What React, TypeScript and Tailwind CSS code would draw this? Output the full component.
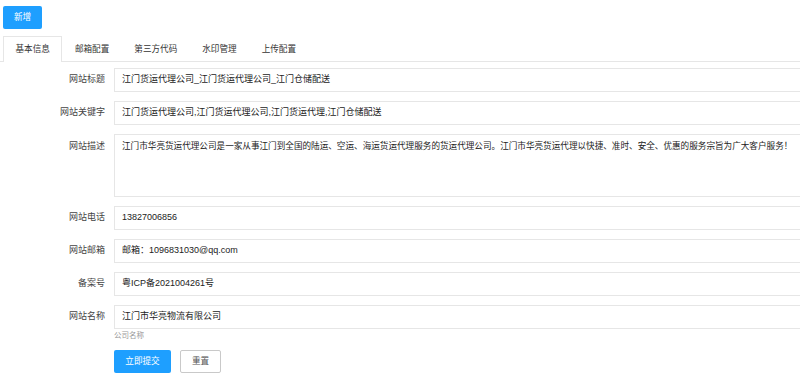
const FIELDS = [
  { label: '网站标题', value: '江门货运代理公司_江门货运代理公司_江门仓储配送' },
  { label: '网站关键字', value: '江门货运代理公司,江门货运代理公司,江门货运代理,江门仓储配送' },
];

const FIELDS2 = [
  { label: '网站电话', value: '13827006856' },
  { label: '网站邮箱', value: '邮箱：1096831030@qq.com' },
  { label: '备案号', value: '粤ICP备2021004261号' },
];

const TABS = ['基本信息', '邮箱配置', '第三方代码', '水印管理', '上传配置'];

const DESC =
  '江门市华亮货运代理公司是一家从事江门到全国的陆运、空运、海运货运代理服务的货运代理公司。江门市华亮货运代理以快捷、准时、安全、优惠的服务宗旨为广大客户服务！';

function Row({ label, value }: { label: string; value: string }) {
  return (
    <div className="flex items-center mb-[9px]">
      <div className="w-[111px] shrink-0 pr-[9px] text-right text-[9px] text-[#444]">{label}</div>
      <div className="flex-1 -mr-[20px] h-[24px] border border-[#e6e6e6] bg-white flex items-center pl-[7px] text-[9px] text-[#222] whitespace-nowrap">
        {value}
      </div>
    </div>
  );
}

export default function App() {
  return (
    <div
      className="w-[800px] h-[381px] overflow-hidden bg-white pt-[6px]"
      style={{ fontFamily: '"Liberation Sans", "Noto Sans CJK SC", sans-serif' }}
    >
      {/* Toolbar */}
      <div className="pl-[3px]">
        <button className="w-[39px] h-[23px] bg-[#1E9FFF] text-white text-[8.6px] rounded-[2px] flex items-center justify-center">
          新增
        </button>
      </div>

      {/* Tabs */}
      <div className="mt-[7px] pl-[3px] flex border-b border-[#e6e6e6]">
        {TABS.map((t, idx) => (
          <div
            key={t}
            className={`h-[26px] -mb-px px-[11.5px] flex items-center text-[8.6px] text-[#333] ${
              idx === 0 ? 'bg-white border-t border-l border-r border-[#e6e6e6]' : 'border border-transparent'
            }`}
          >
            {t}
          </div>
        ))}
      </div>

      {/* Form */}
      <div className="pt-[6px] pl-[3px]">
        {FIELDS.map(f => <Row key={f.label} {...f} />)}

        <div className="flex items-start mb-[9px]">
          <div className="w-[111px] shrink-0 pr-[9px] pt-[6px] text-right text-[9px] text-[#444]">网站描述</div>
          <div className="flex-1 -mr-[20px] h-[63px] border border-[#e6e6e6] bg-white pl-[7px] pt-[5px] text-[8.6px] text-[#222] whitespace-nowrap leading-[13px]">
            {DESC}
          </div>
        </div>

        {FIELDS2.map(f => <Row key={f.label} {...f} />)}

        <div className="flex items-center">
          <div className="w-[111px] shrink-0 pr-[9px] text-right text-[9px] text-[#444]">网站名称</div>
          <div className="flex-1 -mr-[20px] h-[24px] border border-[#e6e6e6] bg-white flex items-center pl-[7px] text-[9px] text-[#222]">
            江门市华亮物流有限公司
          </div>
        </div>
        <div className="pl-[111px] mt-[2px] text-[7.5px] leading-[10px] text-[#999]">公司名称</div>

        <div className="pl-[111px] mt-[9px] flex gap-[9px]">
          <button className="w-[57px] h-[23px] bg-[#1E9FFF] text-white text-[8.6px] rounded-[2px]">立即提交</button>
          <button className="w-[41px] h-[23px] bg-white border border-[#c9c9c9] text-[#555] text-[8.6px] rounded-[2px]">重置</button>
        </div>
      </div>
    </div>
  );
}
